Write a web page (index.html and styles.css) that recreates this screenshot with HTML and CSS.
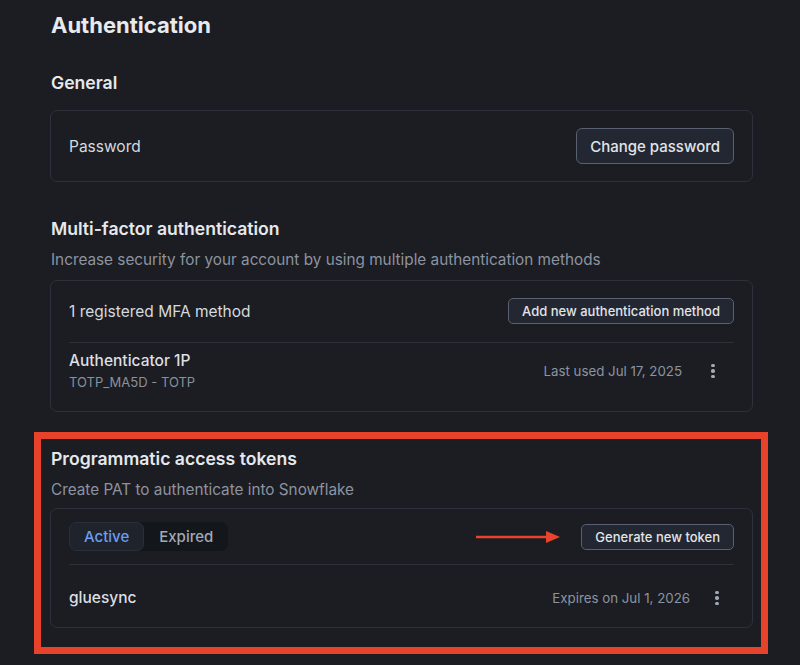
FILE: index.html
```html
<!DOCTYPE html>
<html lang="en">

<head>
    <meta charset="UTF-8">
    <meta name="viewport" content="width=device-width, initial-scale=1.0">
    <title>Authentication</title>
    <link rel="stylesheet" href="styles.css">
</head>

<body>
    <div class="page">
        <h1 class="page-title">Authentication</h1>

        <section class="section">
            <h2 class="section-title">General</h2>
            <div class="card">
                <div class="row row-general">
                    <span class="label">Password</span>
                    <button class="btn">Change password</button>
                </div>
            </div>
        </section>

        <section class="section section-mfa">
            <h2 class="section-title">Multi-factor authentication</h2>
            <p class="section-desc">Increase security for your account by using multiple authentication methods</p>
            <div class="card">
                <div class="row row-head">
                    <span class="label">1 registered MFA method</span>
                    <button class="btn btn-sm">Add new authentication method</button>
                </div>
                <div class="row row-item">
                    <div class="item-info">
                        <span class="item-name">Authenticator 1P</span>
                        <span class="item-sub">TOTP_MA5D - TOTP</span>
                    </div>
                    <div class="item-meta">
                        <span class="meta-text">Last used Jul 17, 2025</span>
                        <span class="kebab"><i></i><i></i><i></i></span>
                    </div>
                </div>
            </div>
        </section>

        <section class="section section-pat highlight">
            <h2 class="section-title">Programmatic access tokens</h2>
            <p class="section-desc">Create PAT to authenticate into Snowflake</p>
            <div class="card">
                <div class="row row-tabs">
                    <div class="segmented">
                        <span class="seg active">Active</span>
                        <span class="seg">Expired</span>
                    </div>
                    <div class="tab-actions">
                        <svg class="arrow" width="84" height="14" viewBox="0 0 84 14">
                            <line x1="0" y1="7" x2="72" y2="7" stroke="#e8442b" stroke-width="2.5"/>
                            <polygon points="70,1 84,7 70,13" fill="#e8442b"/>
                        </svg>
                        <button class="btn btn-sm">Generate new token</button>
                    </div>
                </div>
                <div class="row row-token">
                    <span class="item-name">gluesync</span>
                    <div class="item-meta">
                        <span class="meta-text">Expires on Jul 1, 2026</span>
                        <span class="kebab"><i></i><i></i><i></i></span>
                    </div>
                </div>
            </div>
        </section>
    </div>
</body>

</html>
```

FILE: styles.css
```css
* {
    margin: 0;
    padding: 0;
    box-sizing: border-box;
    font-family: Inter, "Noto Sans", sans-serif;
}

body {
    background: #1b1d22;
    color: #d6d9df;
    height: 665px;
    overflow: hidden;
}

.page {
    width: 703px;
    margin-left: 50px;
    padding-top: 11px;
}

.page-title {
    font-size: 22px;
    line-height: 28px;
    font-weight: 700;
    color: #e8eaee;
    padding-left: 1px;
}

.section {
    margin-top: 32px;
}

.section-title {
    font-size: 17.6px;
    line-height: 24px;
    font-weight: 600;
    color: #e6e8ec;
    padding-left: 1px;
}

.section-desc {
    font-size: 15.3px;
    line-height: 20px;
    color: #8d93a0;
    margin-top: 9px;
    padding-left: 1px;
}

.card {
    border: 1px solid #2c313c;
    border-radius: 7px;
    margin-top: 15px;
    padding: 0 18px;
}

.section-mfa,
.section-pat {
    margin-top: 0;
}

.section-mfa {
    padding-top: 35px;
}

.section-mfa .card {
    margin-top: 10px;
}

.row {
    display: flex;
    align-items: center;
    justify-content: space-between;
}

.row-general {
    padding: 17px 0;
}

.label {
    font-size: 15.5px;
    color: #d6d9df;
}

.btn {
    background: #222732;
    border: 1px solid #596071;
    border-radius: 6px;
    color: #e1e4e9;
    font-size: 15px;
    font-weight: 500;
    height: 36px;
    padding: 0 13px;
}

.btn-sm {
    font-size: 13px;
    height: 26px;
    padding: 0 13px;
    border-radius: 5px;
}

.row-head {
    padding: 17px 0 18px;
    border-bottom: 1px solid #2c313c;
}

.row-item {
    padding: 8px 0 20px;
}

.item-info {
    display: flex;
    flex-direction: column;
}

.item-name {
    font-size: 15.5px;
    line-height: 20px;
    font-weight: 500;
    color: #dcdfe4;
}

.item-sub {
    font-size: 13px;
    line-height: 18px;
    margin-top: 2px;
    color: #8a909c;
}

.item-meta {
    display: flex;
    align-items: center;
}

.meta-text {
    font-size: 13.3px;
    color: #8d93a0;
}

.kebab {
    display: flex;
    flex-direction: column;
    align-items: center;
    gap: 2px;
    width: 12px;
    margin-left: 25px;
    margin-right: 15px;
}

.kebab i {
    width: 3.5px;
    height: 3.5px;
    border-radius: 50%;
    background: #a3a9b5;
}

/* red annotation frame */
.highlight {
    border: 7px solid #e8432a;
    margin: 20px -15px 0 -16px;
    padding: 8px 8px 19px 9px;
}

.section-pat .card {
    margin-top: 8px;
}

.row-tabs {
    padding: 13px 0 13px;
    border-bottom: 1px solid #2c313c;
}

.segmented {
    display: flex;
    background: #13161b;
    border-radius: 7px;
    height: 29px;
}

.seg {
    display: flex;
    align-items: center;
    padding: 0 14px;
    font-size: 15px;
    font-weight: 500;
    color: #a2a8b4;
    border-radius: 7px;
    border: 1px solid transparent;
}

.seg.active {
    background: #1f232c;
    border-color: #2a2f3a;
    color: #6c9cf2;
}

.tab-actions {
    display: flex;
    align-items: center;
}

.arrow {
    margin-right: 21px;
}

.row-token {
    padding: 23px 0 19px;
}

.row-token .kebab {
    margin-left: 21px;
    margin-right: 11px;
}
```
